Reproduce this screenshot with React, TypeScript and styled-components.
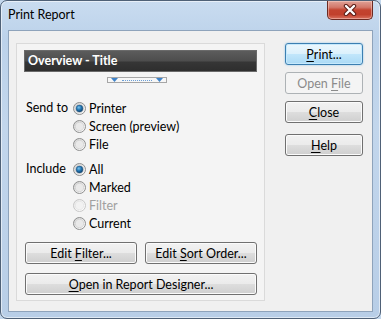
import styled, { createGlobalStyle, css } from "styled-components";

const GlobalStyle = createGlobalStyle`
  html, body { margin: 0; padding: 0; background: #c3d7ec; }
  body { font-family: Lato, "Open Sans", sans-serif; font-size: 12px; color: #000; }
`;

const Window = styled.div`
  box-sizing: border-box;
  width: 381px;
  height: 319px;
  border: 1px solid #4f6177;
  border-radius: 7px;
  background: linear-gradient(180deg, #c9dcf0 0%, #bcd2ea 12%, #c2d6ec 40%, #b8cee7 100%);
  box-shadow: inset 0 0 0 1px rgba(255, 255, 255, 0.55);
  display: flex;
  flex-direction: column;
  overflow: hidden;
`;

const TitleBar = styled.div`
  height: 29px;
  display: flex;
  justify-content: space-between;
  align-items: flex-start;
  padding-left: 7px;
`;

const Caption = styled.div`
  line-height: 28px;
  font-size: 12.5px;
  color: #000;
`;

const CloseButton = styled.div`
  box-sizing: border-box;
  width: 46px;
  height: 19px;
  margin-right: 7px;
  border: 1px solid #6b2a22;
  border-top: none;
  border-radius: 0 0 5px 5px;
  background: linear-gradient(180deg, #e0a297 0%, #d3786a 35%, #c3432f 50%, #c1402c 75%, #d8705e 100%);
  box-shadow: inset 0 0 0 1px rgba(255, 220, 210, 0.45);
  display: flex;
  align-items: center;
  justify-content: center;
`;

const Client = styled.div`
  flex: 1;
  margin: 0 7px 6px 7px;
  border: 1px solid #8ea3bb;
  background: #f0f0f0;
  display: flex;
  align-items: flex-start;
  padding: 12px 0 0 7px;
`;

const Panel = styled.div`
  box-sizing: border-box;
  width: 249px;
  height: 258px;
  border: 1px solid #dadada;
  background: #f4f4f4;
  padding: 6px 7px;
  display: flex;
  flex-direction: column;
`;

const HeaderBar = styled.div`
  box-sizing: border-box;
  height: 22px;
  padding-left: 3px;
  border: 1px solid #6a6a6a;
  background: linear-gradient(180deg, #5c5c5c 0%, #4d4d4d 50%, #363636 55%, #2e2e2e 100%);
  color: #fff;
  font-weight: bold;
  font-size: 12.5px;
  line-height: 20px;
`;

const Splitter = styled.div`
  box-sizing: border-box;
  width: 60px;
  height: 7px;
  margin: 5px 0 0 83px;
  border: 1px solid #a6a6a6;
  background: #f7f7f7;
  display: flex;
  align-items: center;
  justify-content: space-between;
  padding: 0 3px;
`;

const Dots = styled.div`
  flex: 1;
  margin: 0 4px;
  border-top: 1px dotted #6c9fd6;
`;

const OptionGroup = styled.div<{ $gap: number }>`
  display: grid;
  grid-template-columns: 49px 1fr;
  margin-top: ${(p) => p.$gap}px;
`;

const GroupLabel = styled.div`
  padding-left: 2px;
  line-height: 18px;
  font-size: 12.5px;
`;

const OptionList = styled.div`
  display: flex;
  flex-direction: column;
`;

const OptionRow = styled.div<{ $disabled?: boolean }>`
  height: 18px;
  display: flex;
  align-items: center;
  gap: 3px;
  font-size: 12.5px;
  color: ${(p) => (p.$disabled ? "#a0a0a0" : "#000")};
`;

const ButtonGrid = styled.div`
  display: grid;
  grid-template-columns: 112px 112px;
  gap: 9px 8px;
  margin: 10px 0 0 1px;
`;

const SideColumn = styled.div`
  display: flex;
  flex-direction: column;
  gap: 7px;
  margin-left: 20px;
`;

type Variant = "normal" | "primary" | "disabled";

const Button = styled.div<{ $variant?: Variant; $wide?: boolean; $spaced?: boolean }>`
  box-sizing: border-box;
  height: 22px;
  width: ${(p) => (p.$wide ? "232px" : "auto")};
  grid-column: ${(p) => (p.$wide ? "1 / span 2" : "auto")};
  margin-top: ${(p) => (p.$spaced ? "4px" : "0")};
  border: 1px solid #707070;
  border-radius: 3px;
  background: linear-gradient(180deg, #f2f2f2 0%, #ebebeb 48%, #dddddd 52%, #cfcfcf 100%);
  box-shadow: inset 0 0 0 1px #fbfbfb;
  display: flex;
  align-items: center;
  justify-content: center;
  font-size: 12.5px;
  color: #000;
  ${(p) =>
    p.$variant === "primary" &&
    css`
      border-color: #3c7fb1;
      background: linear-gradient(180deg, #ecf7fd 0%, #dcf1fc 48%, #c1e6fb 52%, #abdaf5 100%);
      box-shadow: inset 0 0 0 1px #c6e9fc, 0 0 2px rgba(60, 160, 230, 0.6);
    `}
  ${(p) =>
    p.$variant === "disabled" &&
    css`
      border-color: #adb2b5;
      background: #f4f4f4;
      box-shadow: none;
      color: #8b8b8b;
    `}
  u { text-decoration: underline; text-underline-offset: 2px; }
`;

const SideButton = styled(Button)`
  width: 78px;
`;

function Radio({ checked, disabled }: { checked?: boolean; disabled?: boolean }) {
  const id = checked ? "on" : disabled ? "dis" : "off";
  return (
    <svg width="13" height="13" viewBox="0 0 13 13">
      <defs>
        <linearGradient id={`ring-${id}`} x1="0" y1="0" x2="1" y2="1">
          <stop offset="0" stopColor={disabled ? "#e6e6e6" : "#d0d0d0"} />
          <stop offset="1" stopColor="#ffffff" />
        </linearGradient>
        <radialGradient id={`dot-${id}`} cx="0.4" cy="0.35" r="0.7">
          <stop offset="0" stopColor="#7cc4ee" />
          <stop offset="0.5" stopColor="#2276b3" />
          <stop offset="1" stopColor="#0d3d66" />
        </radialGradient>
      </defs>
      <circle cx="6.5" cy="6.5" r="6" fill={`url(#ring-${id})`} stroke={disabled ? "#c8c8c8" : "#8e8f8f"} strokeWidth="1" />
      <circle cx="6.5" cy="6.5" r="4.2" fill={disabled ? "#f2f2f2" : "#e9e9e9"} stroke={disabled ? "#e0e0e0" : "#c9c9c9"} strokeWidth="0.6" />
      {checked && <circle cx="6.5" cy="6.5" r="3.4" fill={`url(#dot-${id})`} stroke="#1c4f7a" strokeWidth="0.5" />}
    </svg>
  );
}

function Triangle() {
  return (
    <svg width="7" height="4" viewBox="0 0 7 4">
      <path d="M0 0 H7 L3.5 4 Z" fill="#3f83c9" />
    </svg>
  );
}

function CloseGlyph() {
  return (
    <svg width="14" height="12" viewBox="0 0 14 12">
      <path d="M3 2 L11 10 M11 2 L3 10" stroke="#5a1d16" strokeWidth="4.4" strokeLinecap="round" />
      <path d="M3 2 L11 10 M11 2 L3 10" stroke="#ffffff" strokeWidth="2.4" strokeLinecap="round" />
    </svg>
  );
}

const sendTo = [
  { label: "Printer", checked: true },
  { label: "Screen (preview)" },
  { label: "File" },
];

const include = [
  { label: "All", checked: true },
  { label: "Marked" },
  { label: "Filter", disabled: true },
  { label: "Current" },
];

type Option = { label: string; checked?: boolean; disabled?: boolean };

function Options({ title, items, gap }: { title: string; items: Option[]; gap: number }) {
  return (
    <OptionGroup $gap={gap}>
      <GroupLabel>{title}</GroupLabel>
      <OptionList>
        {items.map((o) => (
          <OptionRow key={o.label} $disabled={o.disabled}>
            <Radio checked={o.checked} disabled={o.disabled} />
            {o.label}
          </OptionRow>
        ))}
      </OptionList>
    </OptionGroup>
  );
}

export default function App() {
  return (
    <>
      <GlobalStyle />
      <Window>
        <TitleBar>
          <Caption>Print Report</Caption>
          <CloseButton>
            <CloseGlyph />
          </CloseButton>
        </TitleBar>
        <Client>
          <Panel>
            <HeaderBar>Overview - Title</HeaderBar>
            <Splitter>
              <Triangle />
              <Dots />
              <Triangle />
            </Splitter>
            <Options title="Send to" items={sendTo} gap={16} />
            <Options title="Include" items={include} gap={7} />
            <ButtonGrid>
              <Button>
                Edit&nbsp;<u>F</u>ilter...
              </Button>
              <Button>
                Edit&nbsp;<u>S</u>ort Order...
              </Button>
              <Button $wide>
                <u>O</u>pen in Report Designer...
              </Button>
            </ButtonGrid>
          </Panel>
          <SideColumn>
            <SideButton $variant="primary">
              <u>P</u>rint...
            </SideButton>
            <SideButton $variant="disabled">
              Open&nbsp;<u>F</u>ile
            </SideButton>
            <SideButton>
              <u>C</u>lose
            </SideButton>
            <SideButton $spaced>
              <u>H</u>elp
            </SideButton>
          </SideColumn>
        </Client>
      </Window>
    </>
  );
}
